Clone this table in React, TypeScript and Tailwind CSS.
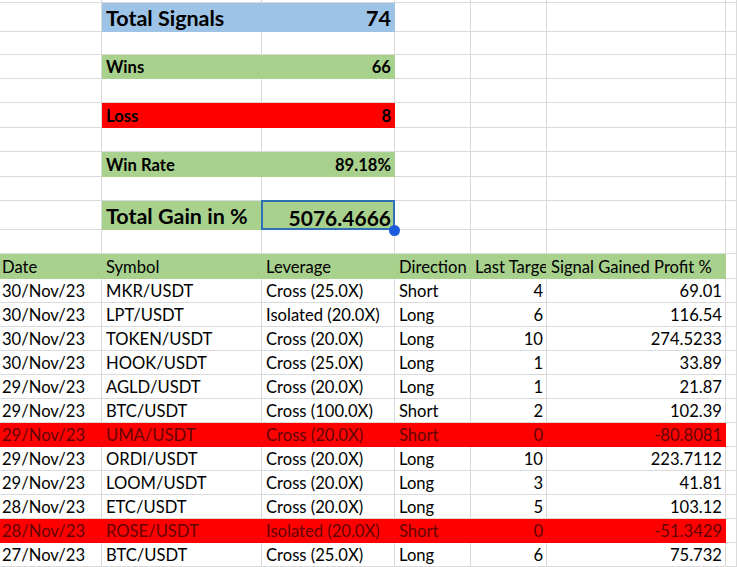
import React from "react";

const COLS = "grid grid-cols-[102px_160px_133px_76px_76px_179px_1fr]";
const FONT = { fontFamily: "Lato, 'Liberation Sans', sans-serif" };

type Fill = "blue" | "green" | "red" | null;

const FILL: Record<string, string> = {
  blue: "bg-[#9dc3e6] border-[#9dc3e6]",
  green: "bg-[#a9d18e] border-[#a9d18e]",
  red: "bg-[#ff0000] border-[#ff0000]",
};

function Cell({
  children,
  fill = null,
  right = false,
  first = false,
  className = "",
}: {
  children?: React.ReactNode;
  fill?: Fill;
  right?: boolean;
  first?: boolean;
  className?: string;
}) {
  return (
    <div
      className={
        "relative flex items-end overflow-hidden whitespace-nowrap border-b border-r pb-[2px] " +
        (fill ? FILL[fill] : "border-[#dadada] bg-white") +
        (right ? " justify-end pr-[3px]" : first ? " pl-[2px]" : " pl-[4px]") +
        " " +
        className
      }
    >
      {children}
    </div>
  );
}

const SUMMARY: { label?: string; value?: string; fill: Fill; h: string; big?: boolean }[] = [
  { label: "Total Signals", value: "74", fill: "blue", h: "h-[29px]", big: true },
  { fill: null, h: "h-[23px]" },
  { label: "Wins", value: "66", fill: "green", h: "h-[24px]" },
  { fill: null, h: "h-[24px]" },
  { label: "Loss", value: "8", fill: "red", h: "h-[25px]" },
  { fill: null, h: "h-[24px]" },
  { label: "Win Rate", value: "89.18%", fill: "green", h: "h-[25px]" },
  { fill: null, h: "h-[24px]" },
];

const TRADES = [
  ["30/Nov/23", "MKR/USDT", "Cross (25.0X)", "Short", "4", "69.01"],
  ["30/Nov/23", "LPT/USDT", "Isolated (20.0X)", "Long", "6", "116.54"],
  ["30/Nov/23", "TOKEN/USDT", "Cross (20.0X)", "Long", "10", "274.5233"],
  ["30/Nov/23", "HOOK/USDT", "Cross (25.0X)", "Long", "1", "33.89"],
  ["29/Nov/23", "AGLD/USDT", "Cross (20.0X)", "Long", "1", "21.87"],
  ["29/Nov/23", "BTC/USDT", "Cross (100.0X)", "Short", "2", "102.39"],
  ["29/Nov/23", "UMA/USDT", "Cross (20.0X)", "Short", "0", "-80.8081"],
  ["29/Nov/23", "ORDI/USDT", "Cross (20.0X)", "Long", "10", "223.7112"],
  ["29/Nov/23", "LOOM/USDT", "Cross (20.0X)", "Long", "3", "41.81"],
  ["28/Nov/23", "ETC/USDT", "Cross (20.0X)", "Long", "5", "103.12"],
  ["28/Nov/23", "ROSE/USDT", "Isolated (20.0X)", "Short", "0", "-51.3429"],
  ["27/Nov/23", "BTC/USDT", "Cross (25.0X)", "Long", "6", "75.732"],
];

export default function App() {
  return (
    <div className="h-[567px] w-[737px] overflow-hidden bg-white text-[16.6px] leading-none text-black" style={FONT}>
      {/* sliver of the row above */}
      <div className={COLS + " h-[3px]"}>
        {Array.from({ length: 7 }).map((_, i) => (
          <div key={i} className="border-b border-r border-[#dadada]" />
        ))}
      </div>

      {SUMMARY.map((r, i) => (
        <div key={i} className={COLS + " " + r.h}>
          <Cell first />
          <Cell fill={r.fill} className={r.big ? "pb-[1px] text-[21.5px] font-bold" : "pb-[1px] font-bold"}>
            {r.label}
          </Cell>
          <Cell fill={r.fill} right className={r.big ? "pb-[1px] text-[21.5px] font-bold" : "pb-[1px] font-bold"}>
            {r.value}
          </Cell>
          <Cell />
          <Cell />
          <Cell />
          <Cell />
        </div>
      ))}

      <div className={COLS + " h-[29px]"}>
        <Cell first />
        <Cell fill="green" className="pb-[1px] text-[21.5px] font-bold">
          Total Gain in %
        </Cell>
        <div className="relative flex items-end justify-end border-b border-r border-[#a9d18e] bg-[#a9d18e] pb-[1px] pr-[3px] text-[21px] font-bold">
          5076.4666
          <div className="pointer-events-none absolute -left-px -top-px bottom-[-1px] right-[-1px] border-2 border-[#2f70b6]" />
        </div>
        <Cell />
        <Cell />
        <Cell />
        <Cell />
      </div>

      <div className={COLS + " relative h-[24px]"}>
        <span className="absolute left-[389px] top-[-5px] z-10 h-[11px] w-[11px] rounded-full bg-[#1a5bdb]" />
        {Array.from({ length: 7 }).map((_, i) => (
          <Cell key={i} />
        ))}
      </div>

      <div className={COLS + " h-[25px]"}>
        <Cell first fill="green">Date</Cell>
        <Cell fill="green">Symbol</Cell>
        <Cell fill="green">Leverage</Cell>
        <Cell fill="green">Direction</Cell>
        <Cell fill="green">Last Targe</Cell>
        <Cell fill="green">Signal Gained Profit %</Cell>
        <Cell />
      </div>

      {TRADES.map((t) => {
        const loss = t[5].startsWith("-");
        const fill: Fill = loss ? "red" : null;
        const tc = loss ? "text-[#620505]" : "";
        return (
          <div key={t[0] + t[1]} className={COLS + " h-[24px]"}>
            <Cell first fill={fill} className={tc}>{t[0]}</Cell>
            <Cell fill={fill} className={tc}>{t[1]}</Cell>
            <Cell fill={fill} className={tc}>{t[2]}</Cell>
            <Cell fill={fill} className={tc}>{t[3]}</Cell>
            <Cell fill={fill} right className={tc}>{t[4]}</Cell>
            <Cell fill={fill} right className={tc}>{t[5]}</Cell>
            <Cell />
          </div>
        );
      })}
    </div>
  );
}
